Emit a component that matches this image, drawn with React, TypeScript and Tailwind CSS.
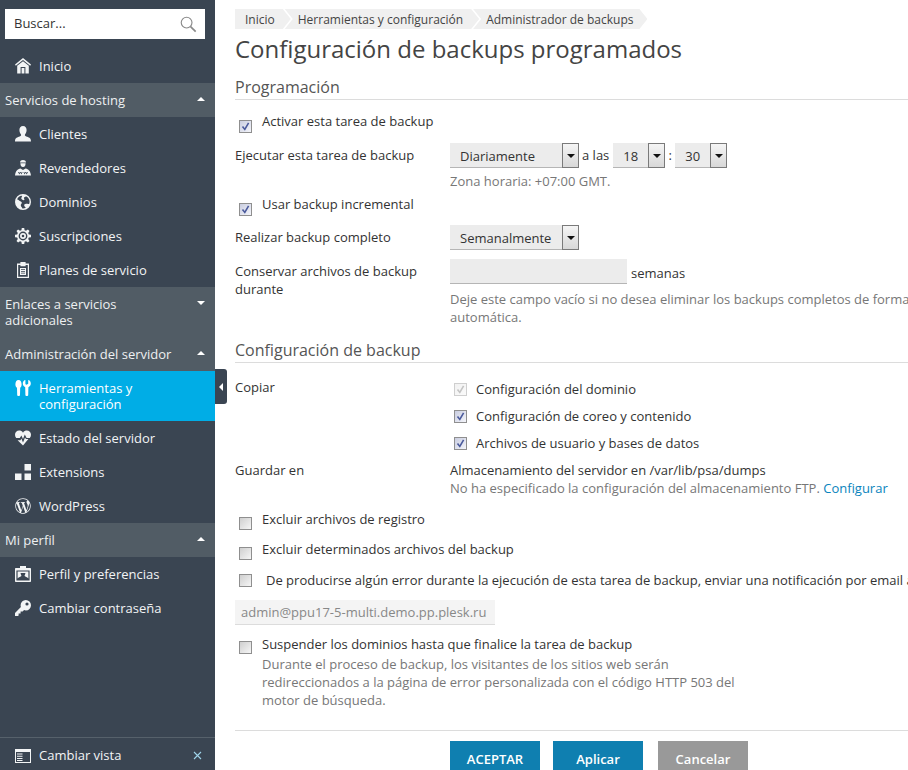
import type { ReactNode } from "react";
import { FaWordpressSimple } from "react-icons/fa";

const HomeIcon = () => (
  <svg viewBox="0 0 16 16" className="w-4 h-4" fill="currentColor">
    <path d="M8 0 L16 6.6 L15.2 7.8 L8 2 L.8 7.8 L0 6.6 Z" />
    <path fillRule="evenodd" d="M8 3.2 L13.8 7.8 V15.5 H2.2 V7.8 Z M5.6 9 V15.5 H10.4 V9 Z" />
    <rect x="6.6" y="10" width="2.8" height="5.5" />
  </svg>
);
const UserIcon = () => (
  <svg viewBox="0 0 16 16" className="w-4 h-4" fill="currentColor">
    <path d="M8 0 C10.4 0 11.6 1.8 11.6 4 C11.6 6.2 10.6 7.6 10 8.4 C9.6 9.4 10.2 10 12 10.8 C14.6 11.8 16 12.4 16 15.5 H0 C0 12.4 1.4 11.8 4 10.8 C5.8 10 6.4 9.4 6 8.4 C5.4 7.6 4.4 6.2 4.4 4 C4.4 1.8 5.6 0 8 0 Z" />
  </svg>
);
const ResellerIcon = () => (
  <svg viewBox="0 0 16 16" className="w-4 h-4" fill="currentColor">
    <path d="M5 2.4 C5.2 .8 6.4 0 8 0 C9.6 0 10.8 .8 11 2.4 Z" />
    <path d="M5.4 3.2 H10.6 C10.6 5.2 9.8 7 8 7 C6.2 7 5.4 5.2 5.4 3.2 Z" />
    <path fillRule="evenodd" d="M5.4 8.4 L8 10 L10.6 8.4 C13.4 9.2 15.4 10.4 16 15.5 H0 C.6 10.4 2.6 9.2 5.4 8.4 Z M3 12 L4.4 14.6 L5.4 12.6 L6.4 14.6 L7.6 12 H6.8 L6.4 13 L5.8 12 H5 L4.4 13 L3.9 12 Z M8.4 12 L9.6 14.6 L10.6 12.6 L11.6 14.6 L13 12 H12.1 L11.6 13 L11 12 H10.2 L9.6 13 L9.2 12 Z" />
  </svg>
);
const GlobeIcon = () => (
  <svg viewBox="0 0 16 16" className="w-4 h-4" fill="currentColor">
    <path fillRule="evenodd" d="M8 0 A8 8 0 1 1 8 16 A8 8 0 1 1 8 0 Z M8 1.5 A6.5 6.5 0 0 0 2 5.6 C3 5.4 3.6 6.2 4.4 6.8 C5.4 7.6 6.6 7.4 6.8 8.6 C7 9.8 5.6 10.2 5.8 11.6 C6 12.8 7 13.4 7.4 14.4 A6.5 6.5 0 0 0 8 14.5 C9 14.5 10 14.2 10.8 13.7 C10.4 12.6 9.4 12.6 9.2 11.4 C9 10.2 10.4 9.4 11.8 9.8 C12.8 10 13.6 10.2 14.4 9.4 A6.5 6.5 0 0 0 11 2.2 C10.4 3 9.4 2.8 9 3.6 C8.6 4.6 9.8 5 9.4 5.8 C8.8 6.8 7 5.8 6.4 4.8 C6 4 6.8 3 7.4 1.5 Z" />
  </svg>
);
const GearIcon = () => (
  <svg viewBox="0 0 16 16" className="w-4 h-4" fill="currentColor">
    <path fillRule="evenodd" d="M6.8 0 H9.2 L9.6 2.2 L11 2.8 L12.9 1.5 L14.5 3.1 L13.2 5 L13.8 6.4 L16 6.8 V9.2 L13.8 9.6 L13.2 11 L14.5 12.9 L12.9 14.5 L11 13.2 L9.6 13.8 L9.2 16 H6.8 L6.4 13.8 L5 13.2 L3.1 14.5 L1.5 12.9 L2.8 11 L2.2 9.6 L0 9.2 V6.8 L2.2 6.4 L2.8 5 L1.5 3.1 L3.1 1.5 L5 2.8 L6.4 2.2 Z M8 3.6 A4.4 4.4 0 1 0 8 12.4 A4.4 4.4 0 1 0 8 3.6 Z" />
    <path fillRule="evenodd" d="M8 5 A3 3 0 1 1 8 11 A3 3 0 1 1 8 5 Z M8 6.7 A1.3 1.3 0 1 0 8 9.3 A1.3 1.3 0 1 0 8 6.7 Z" />
  </svg>
);
const PlanIcon = () => (
  <svg viewBox="0 0 16 16" className="w-4 h-4" fill="currentColor">
    <path fillRule="evenodd" d="M2 1.5 H5.4 V0 H10.6 V1.5 H14 V16 H2 Z M3.2 3 V14.8 H12.8 V3 H10.6 V4.2 H5.4 V3 Z" />
    <path d="M5 6 H11 V13 H5 Z M6 7.2 V8 H10 V7.2 Z M6 9 V9.8 H10 V9 Z M6 10.8 V11.6 H10 V10.8 Z" fillRule="evenodd" />
  </svg>
);
const ToolsIcon = () => (
  <svg viewBox="0 0 16 16" className="w-4 h-4" fill="currentColor">
    <path d="M3.5 0 C5.6 0 6.6 2 6.6 4.4 C6.6 6 6 7.2 5.2 7.8 L5 15 C5 15.6 4.4 16 3.6 16 C2.8 16 2.2 15.6 2.2 15 L2 7.8 C1 7.2 .4 6 .4 4.4 C.4 2 1.4 0 3.5 0 Z" />
    <path d="M9.4 .2 L10.4 0 V3.6 C10.4 4.4 11 4.8 11.8 4.8 C12.6 4.8 13.2 4.4 13.2 3.6 V0 L14.2 .2 C15.4 1 15.8 2.4 15.8 3.6 C15.8 5.4 14.8 6.6 13.4 7.2 L13.2 15 C13.2 15.6 12.6 16 11.8 16 C11 16 10.4 15.6 10.4 15 L10.2 7.2 C8.8 6.6 7.8 5.4 7.8 3.6 C7.8 2.4 8.2 1 9.4 .2 Z" />
  </svg>
);
const HeartIcon = () => (
  <svg viewBox="0 0 16 16" className="w-4 h-4" fill="currentColor">
    <path d="M8 15.5 L2.6 10.2 H5.4 L6.4 8.6 L8 12.4 L10 7.4 L11 9 H13.4 Z" />
    <path d="M8 2.8 C9 1 10.4 .6 11.8 .6 C14.2 .6 16 2.4 16 4.8 C16 6 15.6 7 14.8 8 H11.6 L9.8 4.6 L8 9 L6.4 5.6 L4.8 8 H1.2 C.4 7 0 6 0 4.8 C0 2.4 1.8 .6 4.2 .6 C5.6 .6 7 1 8 2.8 Z" />
  </svg>
);
const ExtensionsIcon = () => (
  <svg viewBox="0 0 16 16" className="w-4 h-4" fill="currentColor">
    <rect x="9.5" y="0" width="6.5" height="6.5" />
    <rect x="0" y="9.5" width="6.5" height="6.5" />
    <rect x="9.5" y="9.5" width="6.5" height="6.5" />
  </svg>
);
const ProfileIcon = () => (
  <svg viewBox="0 0 16 16" className="w-4 h-4" fill="currentColor">
    <path fillRule="evenodd" d="M5 0 H11 V2 H15 C15.6 2 16 2.4 16 3 V15 C16 15.6 15.6 16 15 16 H1 C.4 16 0 15.6 0 15 V3 C0 2.4 .4 2 1 2 H5 Z M1.4 4.4 V14.6 H14.6 V4.4 Z" />
    <path d="M2.6 5.4 H13.4 V12.6 C12 11 10.4 10.6 9.6 10 C9.4 9.2 10.4 8.4 10.4 7 H5.6 C5.6 8.4 6.6 9.2 6.4 10 C5.6 10.6 4 11 2.6 12.6 Z" />
  </svg>
);
const KeyIcon = () => (
  <svg viewBox="0 0 16 16" className="w-4 h-4" fill="currentColor">
    <path fillRule="evenodd" d="M10.8 0 A5.2 5.2 0 1 1 10.8 10.4 C10.2 10.4 9.6 10.3 9.1 10.1 L7.6 11.6 H5.6 V13.6 H3.6 V15.4 L3 16 H0 V13 L5.9 7.1 C5.7 6.6 5.6 6 5.6 5.2 A5.2 5.2 0 0 1 10.8 0 Z M12 2.4 A1.6 1.6 0 1 0 12 5.6 A1.6 1.6 0 1 0 12 2.4 Z" />
  </svg>
);
const ViewIcon = () => (
  <svg viewBox="0 0 16 14" className="w-4 h-[14px]" fill="currentColor">
    <path fillRule="evenodd" d="M0 0 H16 V14 H0 Z M1 3 V13 H15 V3 Z" />
    <path d="M2 4.5 H7.5 V5.5 H2 Z M2 6.8 H7.5 V7.8 H2 Z M2 9 H7.5 V10 H2 Z M2 11 H7.5 V12 H2 Z" />
  </svg>
);

function NavItem({ icon, active, children }: { icon: ReactNode; active?: boolean; children: ReactNode }) {
  return (
    <div className={`flex items-start pl-[15px] pr-4 py-[9px] leading-4 text-[13px] ${active ? "bg-[#00ade6] text-white" : "text-[#f2f4f5]"}`}>
      <span className="w-6 shrink-0">{icon}</span>
      <span>{children}</span>
    </div>
  );
}

function SectionTitle({ open, children }: { open?: boolean; children: ReactNode }) {
  return (
    <div className="flex items-start justify-between bg-[#515c65] pl-[5px] pr-[10px] py-[9px] leading-4 text-[13px] text-[#eef0f1]">
      <span>{children}</span>
      <span className={`mt-[5px] w-0 h-0 border-x-[4px] border-x-transparent ${open ? "border-b-[4px] border-b-white" : "border-t-[4px] border-t-white"}`} />
    </div>
  );
}

function Check({ checked, disabled }: { checked?: boolean; disabled?: boolean }) {
  return (
    <span className={`flex items-center justify-center shrink-0 w-[13px] h-[13px] border bg-gradient-to-br ${disabled ? "border-[#cfcfcf] from-[#f2f2f2] to-[#fafafa]" : checked ? "border-[#8f8f8f] from-[#c9cde0] to-[#f4f5fa]" : "border-[#8f8f8f] from-[#cfcfcf] to-[#f6f6f6]"}`}>
      {checked && (
        <svg viewBox="0 0 11 11" className="w-[11px] h-[11px]" fill="none">
          <path d="M2.5 5.5 L4.8 8.4 L8.6 1.8" stroke={disabled ? "#c4c4c4" : "#4a5a9c"} strokeWidth="1.6" />
        </svg>
      )}
    </span>
  );
}

function Select({ value, width }: { value: string; width: string }) {
  return (
    <div className={`flex justify-between h-[25px] bg-[#ececec] border-b border-b-[#b5b5b5] ${width}`}>
      <span className="pl-[10px] leading-[26px]">{value}</span>
      <span className="flex items-center justify-center w-[17px] h-[25px] border border-[#7a7a7a] bg-gradient-to-b from-[#f5f5f5] to-[#d8d8d8]">
        <span className="w-0 h-0 border-x-[4px] border-x-transparent border-t-[4px] border-t-[#111]" />
      </span>
    </div>
  );
}

function CheckRow({ label, className, checkClass, labelClass, checked }: { label: string; className: string; checkClass?: string; labelClass?: string; checked?: boolean }) {
  return (
    <div className={`flex items-start pl-1 leading-[18px] whitespace-nowrap ${className}`}>
      <span className={checkClass ?? "mt-[7px]"}><Check checked={checked} /></span>
      <span className={labelClass ?? "ml-[10px]"}>{label}</span>
    </div>
  );
}

export default function App() {
  return (
    <div className="flex h-[770px] w-[908px] overflow-hidden bg-white text-[13px] text-[#333] font-['Open_Sans',sans-serif]">
      <aside className="relative flex flex-col w-[215px] shrink-0 bg-[#3a4552]">
        <div className="flex items-center justify-between ml-[5px] w-[200px] mt-[9px] mb-[10px] h-[30px] bg-white pl-[9px] pr-2 text-[#333]">
          <span>Buscar...</span>
          <svg viewBox="0 0 18 18" className="w-[17px] h-[17px]" fill="none" stroke="#8a8a8a">
            <circle cx="7" cy="7" r="5.7" strokeWidth="1.2" />
            <path d="M11.2 11.2 L16.6 16.6" strokeWidth="1.8" />
          </svg>
        </div>
        <NavItem icon={<HomeIcon />}>Inicio</NavItem>
        <SectionTitle open>Servicios de hosting</SectionTitle>
        <NavItem icon={<UserIcon />}>Clientes</NavItem>
        <NavItem icon={<ResellerIcon />}>Revendedores</NavItem>
        <NavItem icon={<GlobeIcon />}>Dominios</NavItem>
        <NavItem icon={<GearIcon />}>Suscripciones</NavItem>
        <NavItem icon={<PlanIcon />}>Planes de servicio</NavItem>
        <SectionTitle>Enlaces a servicios<br />adicionales</SectionTitle>
        <SectionTitle open>Administración del servidor</SectionTitle>
        <NavItem active icon={<ToolsIcon />}>Herramientas y<br />configuración</NavItem>
        <NavItem icon={<HeartIcon />}>Estado del servidor</NavItem>
        <NavItem icon={<ExtensionsIcon />}>Extensions</NavItem>
        <NavItem icon={<FaWordpressSimple className="w-4 h-4" />}>WordPress</NavItem>
        <SectionTitle open>Mi perfil</SectionTitle>
        <NavItem icon={<ProfileIcon />}>Perfil y preferencias</NavItem>
        <NavItem icon={<KeyIcon />}>Cambiar contraseña</NavItem>
        <div className="mt-auto flex items-center justify-between h-[33px] border-t border-t-[#56616b] pt-[3px] pl-[15px] pr-[13px] text-[#f2f4f5]">
          <div className="flex items-center">
            <span className="w-6 shrink-0"><ViewIcon /></span>
            <span>Cambiar vista</span>
          </div>
          <svg viewBox="0 0 9 9" className="w-[9px] h-[9px]" fill="none" stroke="#9fd4ea" strokeWidth="1.1">
            <path d="M1 1 L8 8 M8 1 L1 8" />
          </svg>
        </div>
        <div className="absolute left-[215px] top-[369px] flex items-center justify-center w-3 h-[35px] rounded-r-[3px] bg-[#3a4552]">
          <span className="w-0 h-0 border-y-[4px] border-y-transparent border-r-[4px] border-r-white" />
        </div>
      </aside>

      <main className="flex-1 min-w-0 overflow-hidden pl-5 pt-[9px] whitespace-nowrap">
        <nav className="flex h-5 leading-[21px] text-xs text-[#444]">
          <span className="bg-[#f0f0f0] pl-[10px] pr-4 [clip-path:polygon(0_0,calc(100%-8px)_0,100%_50%,calc(100%-8px)_100%,0_100%)]">Inicio</span>
          <span className="-ml-[6px] bg-[#f0f0f0] pl-[13px] pr-4 [clip-path:polygon(0_0,calc(100%-8px)_0,100%_50%,calc(100%-8px)_100%,0_100%,8px_50%)]">Herramientas y configuración</span>
          <span className="-ml-[6px] bg-[#f0f0f0] pl-[13px] pr-[14px] [clip-path:polygon(0_0,calc(100%-8px)_0,100%_50%,calc(100%-8px)_100%,0_100%,8px_50%)]">Administrador de backups</span>
        </nav>
        <h1 className="mt-[3px] h-[34px] leading-[34px] text-2xl text-[#444]">Configuración de backups programados</h1>

        <h2 className="mt-[10px] h-[23px] leading-[22px] text-base text-[#555] border-b border-b-[#dcdcdc] box-content">Programación</h2>

        <div className="mt-[12px] flex items-start pl-1 leading-[18px]">
          <span className="mt-[8px]"><Check checked /></span>
          <span className="ml-[10px]">Activar esta tarea de backup</span>
        </div>

        <div className="mt-[10px] flex">
          <span className="w-[215px] shrink-0 pt-[3px] leading-[18px]">Ejecutar esta tarea de backup</span>
          <div>
            <div className="flex items-start leading-[25px]">
              <Select value="Diariamente" width="w-[129px]" />
              <span className="ml-[3px] mr-[4px]">a las</span>
              <Select value="18" width="w-[52px]" />
              <span className="w-[10px] text-center">:</span>
              <Select value="30" width="w-[52px]" />
            </div>
            <p className="mt-[4px] leading-[18px] text-[#777]">Zona horaria: +07:00 GMT.</p>
          </div>
        </div>

        <div className="mt-[5px] flex items-start pl-1 leading-[18px]">
          <span className="mt-[8px]"><Check checked /></span>
          <span className="ml-[10px]">Usar backup incremental</span>
        </div>

        <div className="mt-[9px] flex">
          <span className="w-[215px] shrink-0 pt-[3px] leading-[18px]">Realizar backup completo</span>
          <Select value="Semanalmente" width="w-[129px]" />
        </div>

        <div className="mt-[9px] flex">
          <span className="w-[215px] shrink-0 pt-[3px] leading-[18px]">Conservar archivos de backup<br />durante</span>
          <div>
            <div className="flex items-start">
              <div className="w-[177px] h-[25px] bg-[#ececec] border-b border-b-[#b5b5b5]" />
              <span className="ml-1 mt-[5px] leading-[18px]">semanas</span>
            </div>
            <p className="mt-[6px] leading-[18px] text-[#777]">
              Deje este campo vacío si no desea eliminar los backups completos de forma<br />automática.
            </p>
          </div>
        </div>

        <h2 className="mt-[13px] h-[23px] leading-[22px] text-base text-[#555] border-b border-b-[#dcdcdc] box-content">Configuración de backup</h2>

        <div className="mt-[13px] flex">
          <span className="w-[215px] shrink-0 leading-[18px] mt-[2px]">Copiar</span>
          <div className="flex flex-col gap-[9px] pl-1 pt-[4px]">
            <div className="flex items-center leading-[18px]"><Check checked disabled /><span className="ml-[9px]">Configuración del dominio</span></div>
            <div className="flex items-center leading-[18px]"><Check checked /><span className="ml-[9px]">Configuración de coreo y contenido</span></div>
            <div className="flex items-center leading-[18px]"><Check checked /><span className="ml-[9px]">Archivos de usuario y bases de datos</span></div>
          </div>
        </div>

        <div className="mt-[9px] flex leading-[18px]">
          <span className="w-[215px] shrink-0">Guardar en</span>
          <div>
            <p>Almacenamiento del servidor en /var/lib/psa/dumps</p>
            <p className="text-[#777]">No ha especificado la configuración del almacenamiento FTP. <a className="text-[#0a84bd]">Configurar</a></p>
          </div>
        </div>

        <CheckRow label="Excluir archivos de registro" className="mt-[13px]" />
        <CheckRow label="Excluir determinados archivos del backup" className="mt-[10px]" />
        <CheckRow label="De producirse algún error durante la ejecución de esta tarea de backup, enviar una notificación por email a la siguiente dirección:" className="mt-[11px]" checkClass="mt-[3px]" labelClass="ml-[14px]" />

        <div className="mt-[11px] w-[260px] h-[25px] pl-[6px] leading-[25px] bg-[#f4f4f4] border-b border-b-[#dcdcdc] text-[#888]">admin@ppu17-5-multi.demo.pp.plesk.ru</div>

        <div className="mt-[10px] flex items-start pl-1 leading-[18px]">
          <span className="mt-[6px]"><Check /></span>
          <div className="ml-[10px]">
            <p>Suspender los dominios hasta que finalice la tarea de backup</p>
            <p className="mt-[2px] text-[#777]">
              Durante el proceso de backup, los visitantes de los sitios web serán<br />
              redireccionados a la página de error personalizada con el código HTTP 503 del<br />
              motor de búsqueda.
            </p>
          </div>
        </div>

        <div className="mt-[21px] border-t border-t-[#dcdcdc] pt-[10px] pl-[215px] flex">
          <button className="w-[90px] h-[38px] bg-[#0f7fb0] text-white font-semibold">ACEPTAR</button>
          <button className="ml-[13px] w-[90px] h-[38px] bg-[#0f7fb0] text-white font-semibold">Aplicar</button>
          <button className="ml-[15px] w-[90px] h-[38px] bg-[#999] text-white font-semibold">Cancelar</button>
        </div>
      </main>
    </div>
  );
}
